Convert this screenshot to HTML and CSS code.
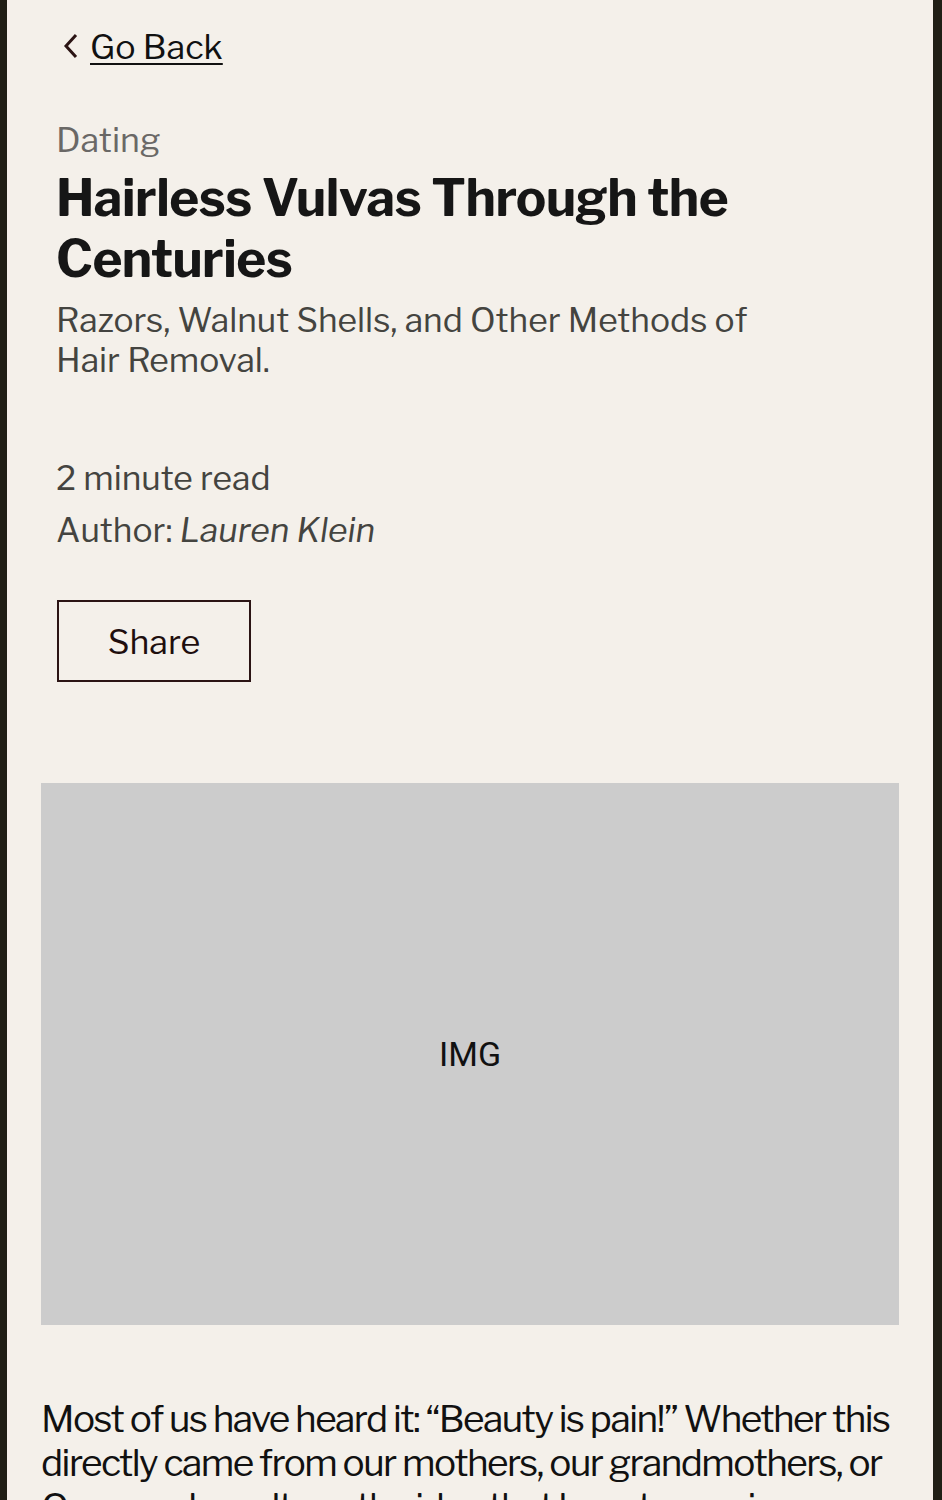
FILE: index.html
```html
<!DOCTYPE html>
<html lang="en">
<head>
<meta charset="utf-8">
<title>Hairless Vulvas Through the Centuries</title>
<link rel="stylesheet" href="styles.css">
</head>
<body>
<div class="page">
  <nav class="back">
    <svg class="chev" width="16" height="26" viewBox="0 0 16 26" aria-hidden="true"><path d="M13 2 L3 13 L13 24" fill="none" stroke="#2b1414" stroke-width="3"/></svg>
    <a href="#" class="back-link">Go Back</a>
  </nav>
  <header class="head">
    <div class="cat">Dating</div>
    <h1 class="title">Hairless Vulvas Through the Centuries</h1>
    <p class="sub">Razors, Walnut Shells, and Other Methods of Hair Removal.</p>
    <div class="meta">
      <div class="read">2 minute read</div>
      <div class="author">Author: <em>Lauren Klein</em></div>
    </div>
    <button class="share">Share</button>
  </header>
  <div class="img">IMG</div>
  <p class="body">Most of us have heard it: “Beauty is pain!” Whether this directly came from our mothers, our grandmothers, or Our popular culture, the idea that beauty requires suffering is ubiquitous.</p>
</div>
</body>
</html>
```
FILE: styles.css
```css
html, body { margin: 0; padding: 0; }
body { background: #201f16; font-family: "Libre Franklin", "Inter", "Noto Sans", sans-serif; }
.page { margin: 0 9px 0 7px; background: #f4f0ea; min-height: 1500px; padding: 0 34px; overflow: hidden; }
.back { display: flex; align-items: center; gap: 11px; padding: 26px 0 0 22px; height: 40px; }
.chev { display: block; }
.back-link { color: #111; font-size: 34px; text-decoration: underline; text-underline-offset: 4px; text-decoration-thickness: 2px; }
.head { padding-left: 15px; }
.cat { margin-top: 54px; font-size: 34px; color: #6a6866; line-height: 40px; }
.title { margin: 8px 0 0; font-size: 51px; line-height: 61px; font-weight: 700; color: #161616; letter-spacing: -0.5px; }
.sub { margin: 10px 0 0; font-size: 33.6px; line-height: 40px; color: #444440; width: 720px; }
.meta { margin-top: 72px; font-size: 33.6px; color: #444440; line-height: 52px; }
.author em { font-style: italic; }
.share { margin-top: 44px; margin-left: 1px; width: 194px; height: 82px; border: 2px solid #2b1414; background: transparent; font-family: inherit; font-size: 34px; color: #1e0e0e; }
.img { margin-top: 101px; height: 542px; background: #cccccc; display: flex; align-items: center; justify-content: center; font-family: "Roboto", sans-serif; font-size: 34px; color: #111; }
.body { margin: 72px 0 0; font-size: 37px; line-height: 44px; color: #111; letter-spacing: -1.55px; }
```
